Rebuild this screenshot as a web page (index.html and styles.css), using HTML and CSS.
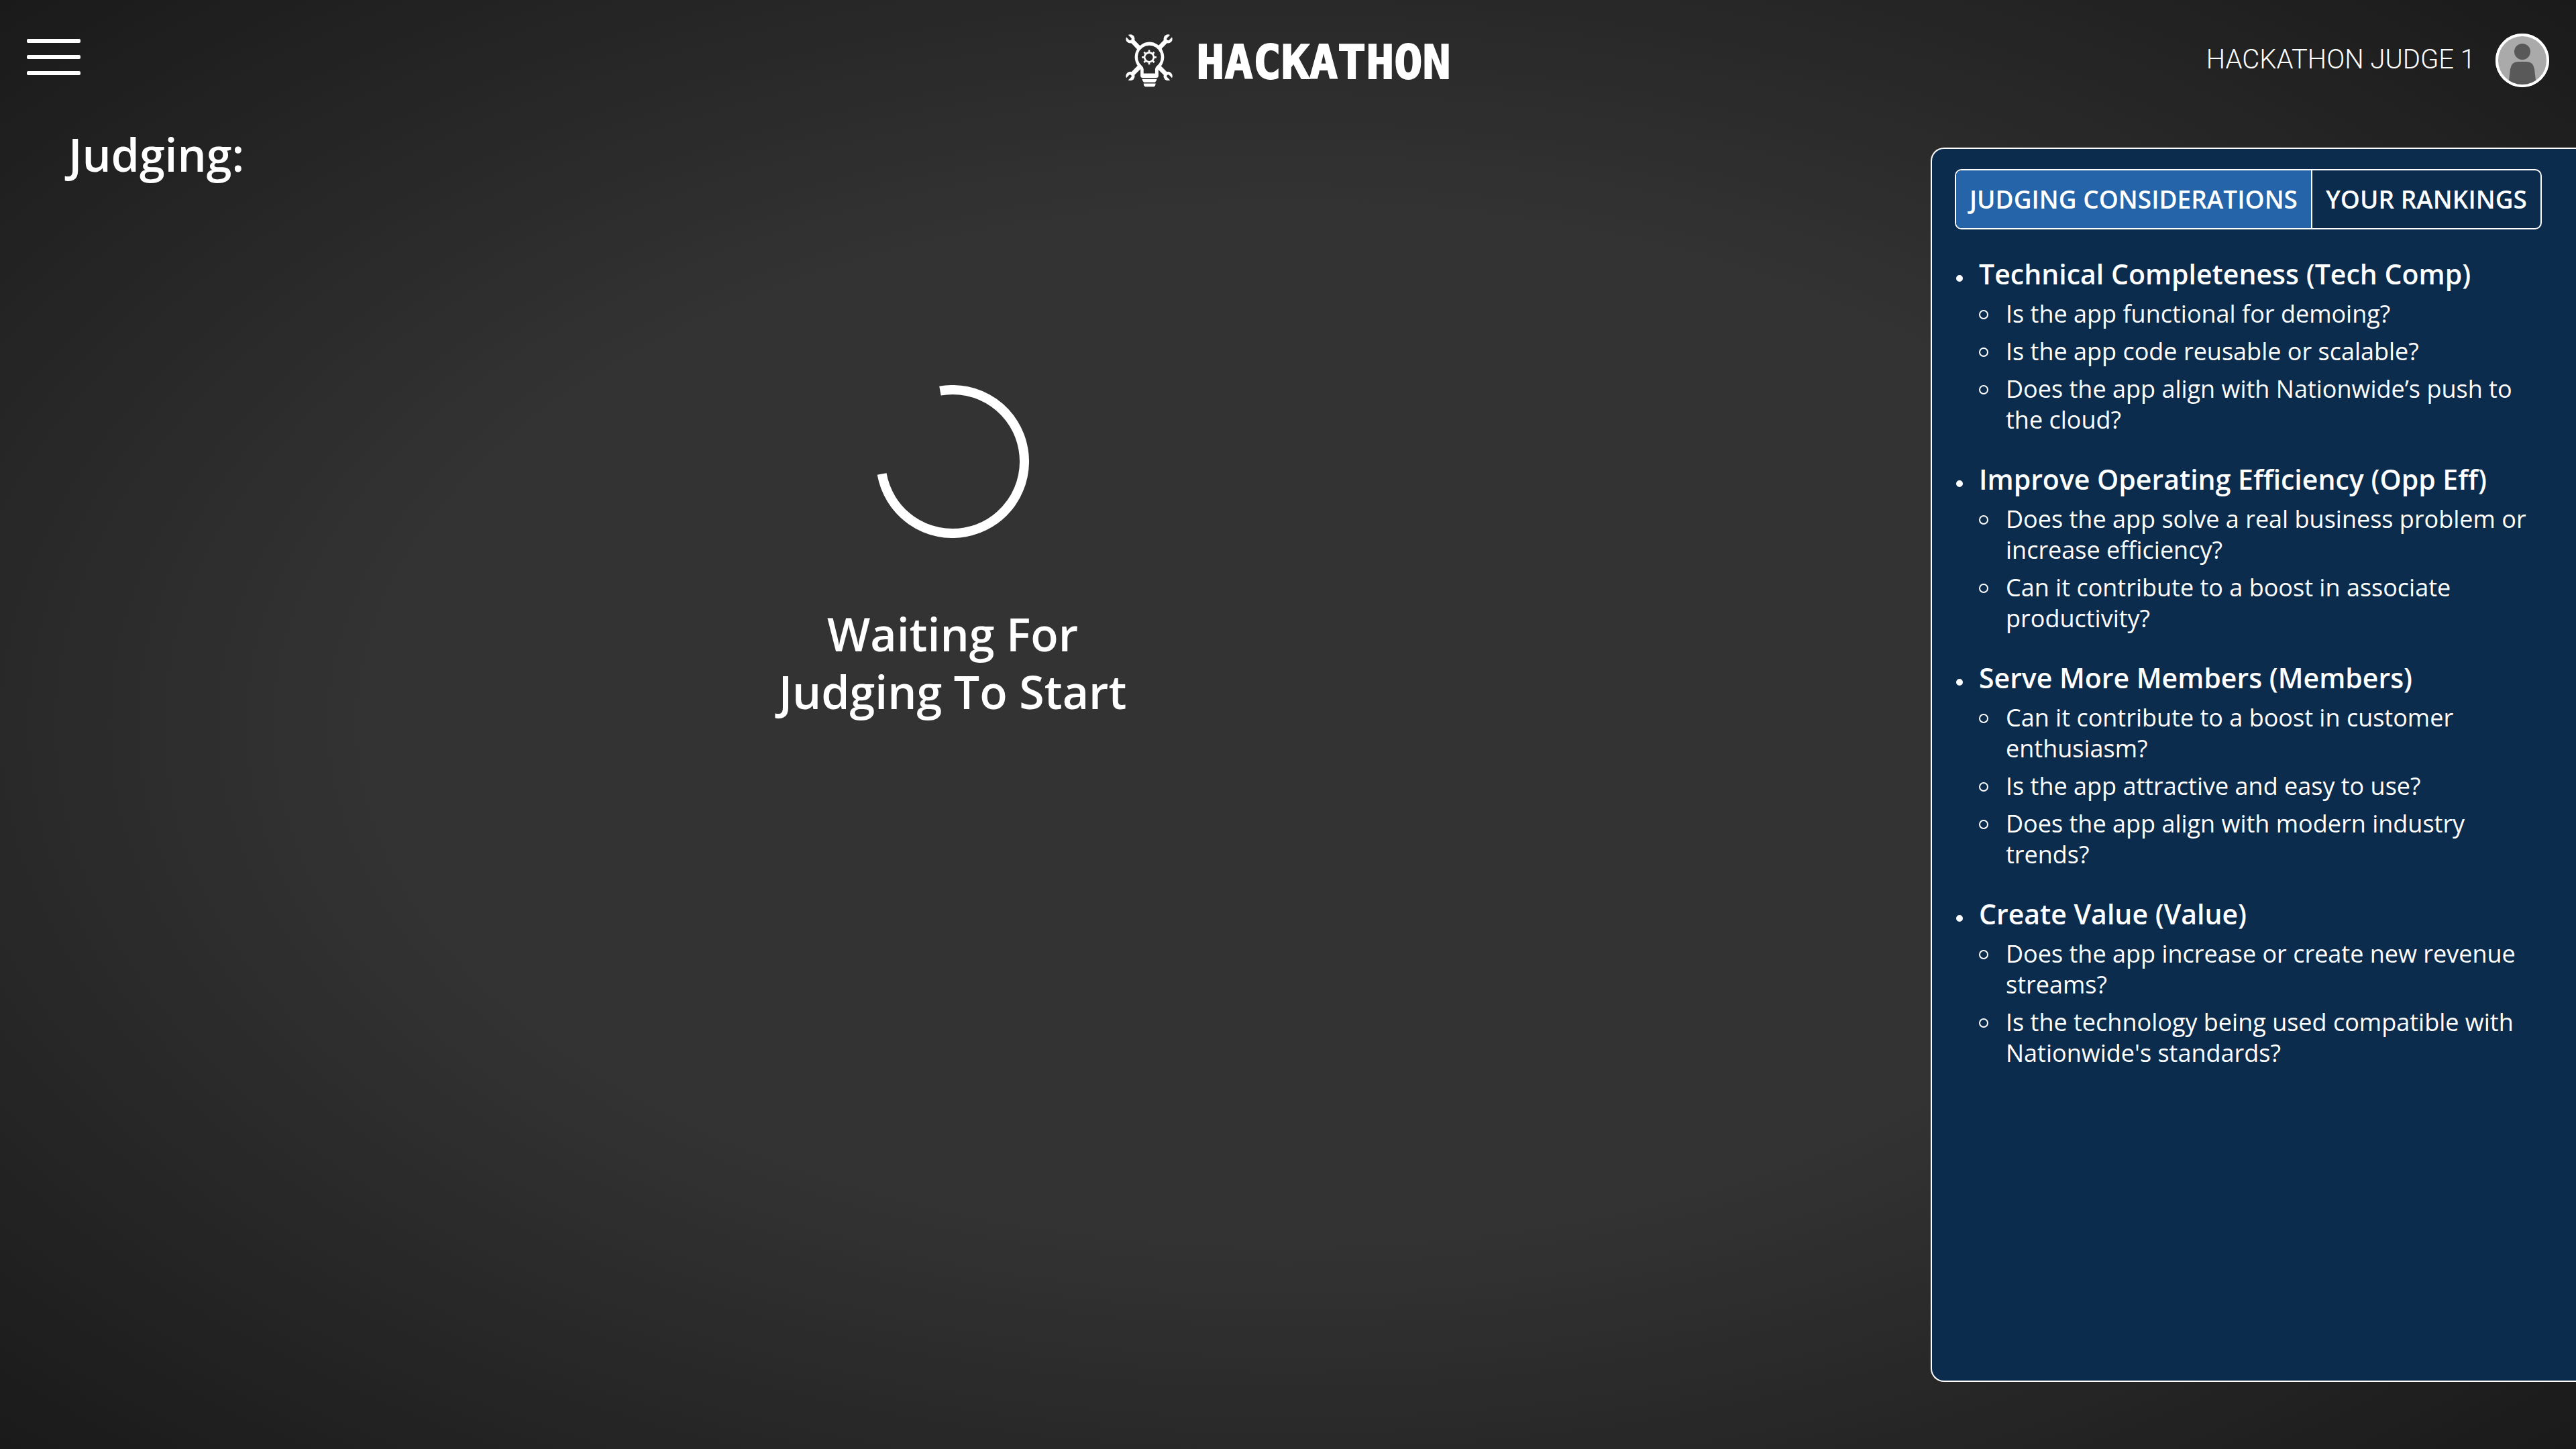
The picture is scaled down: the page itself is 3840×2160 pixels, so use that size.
FILE: index.html
```html
<!DOCTYPE html>
<html lang="en">
<head>
<meta charset="utf-8">
<meta name="viewport" content="width=device-width, initial-scale=1">
<title>Hackathon – Judging</title>
<link rel="stylesheet" href="styles.css">
</head>
<body>
<header class="topbar">
  <button class="menu" type="button" aria-label="Open menu">
    <span class="menu-line"></span>
    <span class="menu-line"></span>
    <span class="menu-line"></span>
  </button>
  <a class="brand" href="#">
    <svg class="brand-mark" viewBox="48 30 216 242" aria-hidden="true">
      <defs>
        <mask id="jaws" maskUnits="userSpaceOnUse" x="40" y="20" width="240" height="260">
          <rect x="40" y="20" width="240" height="260" fill="#fff"/>
          <path d="M48 31L70 54M264 31L242 54M48 245L70 222M264 245L242 222" stroke="#000" stroke-width="13" stroke-linecap="round"/>
          <circle cx="156" cy="136" r="60" fill="#000"/>
        </mask>
      </defs>
      <g mask="url(#jaws)">
        <circle cx="71" cy="54" r="20"/><circle cx="241" cy="54" r="20"/>
        <circle cx="71" cy="222" r="20"/><circle cx="241" cy="222" r="20"/>
        <path d="M71 54L112 97M241 54L200 97M71 222L116 177M241 222L196 177" stroke="#fff" stroke-width="20"/>
      </g>
      <path fill-rule="evenodd" d="M156 68a68 68 0 0 1 42 121v31q0 10-10 10h-61q-10 0-10-10v-31A68 68 0 0 1 156 68zM156 84a52 52 0 0 0-33 92q8 6 8 14v20h52v-20q0-8 8-14a52 52 0 0 0-35-92z"/>
      <path d="M124 235h67q-1 9-8 15h-51q-7-6-8-15zM131 255h54q0 15-13 15h-28q-13 0-13-15z"/>
      <g class="gear">
        <circle cx="156" cy="137" r="21" stroke-width="8"/>
        <path stroke-width="8" d="M156 104v9M156 161v9M123 137h9M180 137h9M133 114l6 6M173 154l6 6M133 160l6-6M173 120l6-6"/>
      </g>
    </svg>
    <span class="brand-name">HACKATHON</span>
  </a>
  <div class="user">
    <span class="user-name">HACKATHON JUDGE 1</span>
    <svg class="avatar" viewBox="0 0 80 80" role="img" aria-label="Profile picture">
      <defs><clipPath id="face"><circle cx="40" cy="40" r="37"/></clipPath></defs>
      <circle cx="40" cy="40" r="40" fill="#fff"/>
      <g clip-path="url(#face)">
        <rect width="80" height="80" fill="#aaa"/>
        <circle cx="40" cy="27" r="12" fill="#595959"/>
        <path d="M20 80V70L22 53Q24 42 33 42H47Q56 42 58 53L60 70V80z" fill="#595959"/>
      </g>
      <circle cx="40" cy="40" r="38" fill="none" stroke="#fff" stroke-width="4"/>
    </svg>
  </div>
</header>
<main class="content">
  <section class="stage">
    <h1 class="title">Judging:</h1>
    <div class="waiting" role="status">
      <svg class="spinner" viewBox="0 0 228 228" aria-hidden="true">
        <circle cx="114" cy="114" r="107" pathLength="360" stroke-dasharray="270 90" transform="rotate(-100 114 114)"/>
      </svg>
      <p class="waiting-text">Waiting For<br>Judging To Start</p>
    </div>
  </section>
  <aside class="panel">
    <div class="tabs">
      <button class="tab tab-active" type="button" aria-pressed="true">JUDGING CONSIDERATIONS</button>
      <button class="tab" type="button" aria-pressed="false">YOUR RANKINGS</button>
    </div>
    <ul class="groups">
      <li class="group">
        <h2 class="group-title">Technical Completeness (Tech Comp)</h2>
        <ul class="items">
          <li class="item">Is the app functional for demoing?</li>
          <li class="item">Is the app code reusable or scalable?</li>
          <li class="item">Does the app align with Nationwide’s push to the cloud?</li>
        </ul>
      </li>
      <li class="group">
        <h2 class="group-title">Improve Operating Efficiency (Opp Eff)</h2>
        <ul class="items">
          <li class="item">Does the app solve a real business problem or increase efficiency?</li>
          <li class="item">Can it contribute to a boost in associate productivity?</li>
        </ul>
      </li>
      <li class="group">
        <h2 class="group-title">Serve More Members (Members)</h2>
        <ul class="items">
          <li class="item">Can it contribute to a boost in customer enthusiasm?</li>
          <li class="item">Is the app attractive and easy to use?</li>
          <li class="item">Does the app align with modern industry trends?</li>
        </ul>
      </li>
      <li class="group">
        <h2 class="group-title">Create Value (Value)</h2>
        <ul class="items">
          <li class="item">Does the app increase or create new revenue streams?</li>
          <li class="item">Is the technology being used compatible with Nationwide's standards?</li>
        </ul>
      </li>
    </ul>
  </aside>
</main>
</body>
</html>
```
FILE: styles.css
```css
*,
*::before {
  box-sizing: border-box;
}

body {
  display: flex;
  flex-direction: column;
  min-height: 100vh;
  margin: 0;
  color: #fff;
  background: radial-gradient(#333 50%, #1a1a1a);
  font-family: "Open Sans", sans-serif;
  font-size: 36px;
  line-height: 46px;
}

h1, h2, p, ul {
  margin: 0;
  padding: 0;
}

ul {
  list-style: none;
}

button {
  border: 0;
  background: none;
  color: inherit;
  font: inherit;
  cursor: pointer;
}

/* Top bar */
.topbar {
  display: grid;
  grid-template-columns: 1fr auto 1fr;
  align-items: center;
  height: 180px;
  padding: 0 40px;
}

.menu {
  display: flex;
  flex-direction: column;
  gap: 18px;
  width: 80px;
  padding: 0 0 10px;
}

.menu-line {
  width: 100%;
  height: 6px;
  border-radius: 2px;
  background: #fff;
}

.brand {
  display: flex;
  align-items: center;
  gap: 34px;
  color: inherit;
  text-decoration: none;
}

.brand-mark {
  width: 72px;
  height: 80px;
  fill: #fff;
}

.gear {
  fill: none;
  stroke: #fff;
}

.brand-name {
  padding-top: 6px;
  font: bold 70px/80px "DejaVu Sans Mono", monospace;
  -webkit-text-stroke: 2px #fff;
}

.user {
  display: flex;
  align-items: center;
  justify-content: flex-end;
  gap: 30px;
}

.user-name {
  padding-bottom: 2px;
  font: 300 40px/48px Roboto, sans-serif;
}

.avatar {
  width: 80px;
  height: 80px;
}

/* Main area */
.content {
  display: grid;
  grid-template-columns: 1fr 962px;
  flex: 1;
  gap: 38px;
  padding-bottom: 100px;
}

.stage {
  padding-top: 10px;
}

.title {
  padding-left: 102px;
  font-size: 68px;
  font-weight: 600;
  line-height: 80px;
}

.waiting {
  display: flex;
  flex-direction: column;
  align-items: center;
  gap: 100px;
  margin-top: 304px;
}

.spinner {
  width: 228px;
  height: 228px;
  fill: none;
  stroke: #fff;
  stroke-width: 14px;
}

.waiting-text {
  font-size: 68px;
  font-weight: 600;
  line-height: 86px;
  text-align: center;
}

/* Side panel */
.panel {
  margin-top: 40px;
  padding: 30px 60px 30px 34px;
  border: 2px solid #fff;
  border-right: 0;
  border-radius: 20px 0 0 20px;
  background: #0c2c4e;
}

.tabs {
  display: inline-flex;
  height: 90px;
  overflow: hidden;
  border: 2px solid #fff;
  border-radius: 10px;
  vertical-align: top;
}

.tab {
  padding: 0 20px;
  font-size: 37px;
  font-weight: 600;
  white-space: nowrap;
}

.tab + .tab {
  border-left: 2px solid #fff;
}

.tab-active {
  background: #2564a8;
}

.groups {
  display: flex;
  flex-direction: column;
  gap: 40px;
  margin-top: 41px;
}

.group {
  display: grid;
  grid-template-columns: 36px 1fr;
}

.group::before {
  content: "";
  width: 10px;
  height: 10px;
  margin: 27px 0 0 2px;
  border-radius: 50%;
  background: #fff;
}

.group-title {
  font-size: 41px;
  font-weight: 600;
  line-height: 50px;
}

.items {
  grid-column: 2;
  padding-top: 2px;
}

.item {
  display: grid;
  grid-template-columns: 40px 1fr;
  margin-top: 10px;
}

.item::before {
  content: "";
  width: 14px;
  height: 14px;
  margin-top: 17px;
  border: 2px solid #fff;
  border-radius: 50%;
}
```
